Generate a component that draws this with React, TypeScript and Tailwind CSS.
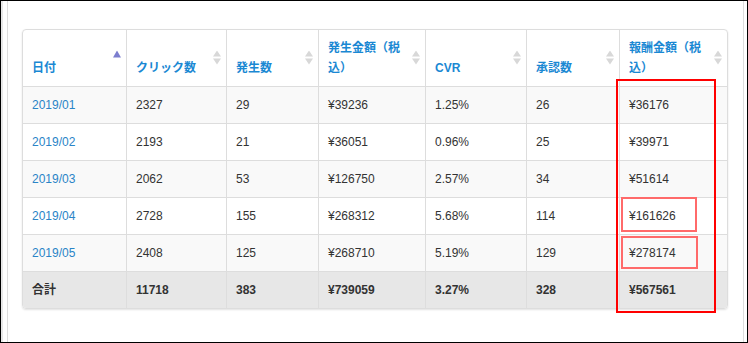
import React from 'react';

type Row = {
  month: string;
  clicks: string;
  count: string;
  amount: string;
  cvr: string;
  approved: string;
  reward: string;
};

const ROWS: Row[] = [
  { month: '2019/01', clicks: '2327', count: '29', amount: '¥39236', cvr: '1.25%', approved: '26', reward: '¥36176' },
  { month: '2019/02', clicks: '2193', count: '21', amount: '¥36051', cvr: '0.96%', approved: '25', reward: '¥39971' },
  { month: '2019/03', clicks: '2062', count: '53', amount: '¥126750', cvr: '2.57%', approved: '34', reward: '¥51614' },
  { month: '2019/04', clicks: '2728', count: '155', amount: '¥268312', cvr: '5.68%', approved: '114', reward: '¥161626' },
  { month: '2019/05', clicks: '2408', count: '125', amount: '¥268710', cvr: '5.19%', approved: '129', reward: '¥278174' },
];

const TOTAL = ['合計', '11718', '383', '¥739059', '3.27%', '328', '¥567561'];

const COLS: Array<{ label: React.ReactNode; width: number }> = [
  { label: '日付', width: 103 },
  { label: 'クリック数', width: 100 },
  { label: '発生数', width: 92 },
  { label: <>発生金額（税<br />込）</>, width: 107 },
  { label: 'CVR', width: 101 },
  { label: '承認数', width: 93 },
  { label: <>報酬金額（税<br />込）</>, width: 108 },
];

const FONT = { fontFamily: '"Liberation Sans", "Noto Sans CJK JP", sans-serif' };

function SortIcon({ active }: { active?: boolean }) {
  return (
    <svg width="8" height="15" viewBox="0 0 8 15" className="absolute right-[5px] top-1/2 -translate-y-1/2">
      {active ? (
        <polygon points="4,0 8,7 0,7" fill="#7c7ecf" />
      ) : (
        <>
          <polygon points="4,0 8,6 0,6" fill="#d8d8d8" />
          <polygon points="0,8 8,8 4,14" fill="#d8d8d8" />
        </>
      )}
    </svg>
  );
}

export default function App() {
  return (
    <div className="relative flex h-[343px] w-[748px] border border-black bg-white" style={FONT}>
      <div className="w-[2px] bg-[#e8e8e8]" />
      <div className="w-[4px]" />
      <div className="w-[737px] border-x border-[#dddddd] pl-[14px] pt-[28px]">
        <div className="w-[706px] overflow-hidden rounded border border-[#dddddd] shadow-[0_1px_2px_rgba(0,0,0,0.12)]">
          <table className="w-[704px] table-fixed border-separate border-spacing-0 text-[12px] leading-[20px] text-[#333]">
            <colgroup>
              {COLS.map((c, i) => (
                <col key={i} style={{ width: c.width }} />
              ))}
            </colgroup>
            <thead>
              <tr>
                {COLS.map((c, i) => (
                  <th
                    key={i}
                    className={`relative h-[57px] border-b border-[#dddddd] pb-[8px] pl-[9px] pr-[20px] pt-[8px] text-left align-bottom font-bold text-[#1a88d3] ${
                      i > 0 ? 'border-l' : ''
                    }`}
                  >
                    {c.label}
                    <SortIcon active={i === 0} />
                  </th>
                ))}
              </tr>
            </thead>
            <tbody>
              {ROWS.map((r, i) => (
                <tr key={r.month} className={i % 2 === 0 ? 'bg-[#f9f9f9]' : 'bg-white'}>
                  {[r.month, r.clicks, r.count, r.amount, r.cvr, r.approved, r.reward].map((v, j) => (
                    <td
                      key={j}
                      className={`h-[37px] border-b border-[#dddddd] px-[9px] py-[8px] ${j > 0 ? 'border-l' : 'text-[#2a84c7]'}`}
                    >
                      {v}
                    </td>
                  ))}
                </tr>
              ))}
              <tr className="bg-[#e7e7e7]">
                {TOTAL.map((v, j) => (
                  <td key={j} className={`h-[36px] border-[#dddddd] px-[9px] py-[8px] font-bold ${j > 0 ? 'border-l' : ''}`}>
                    {v}
                  </td>
                ))}
              </tr>
            </tbody>
          </table>
        </div>
      </div>

      {/* annotation boxes */}
      <div className="absolute left-[615px] top-[78px] h-[234px] w-[100px] border-2 border-[#ff0000]" />
      <div className="absolute left-[620px] top-[196px] h-[35px] w-[76px] border-2 border-[#ff6a6a]" />
      <div className="absolute left-[620px] top-[235px] h-[33px] w-[77px] border-2 border-[#ff6a6a]" />
    </div>
  );
}
